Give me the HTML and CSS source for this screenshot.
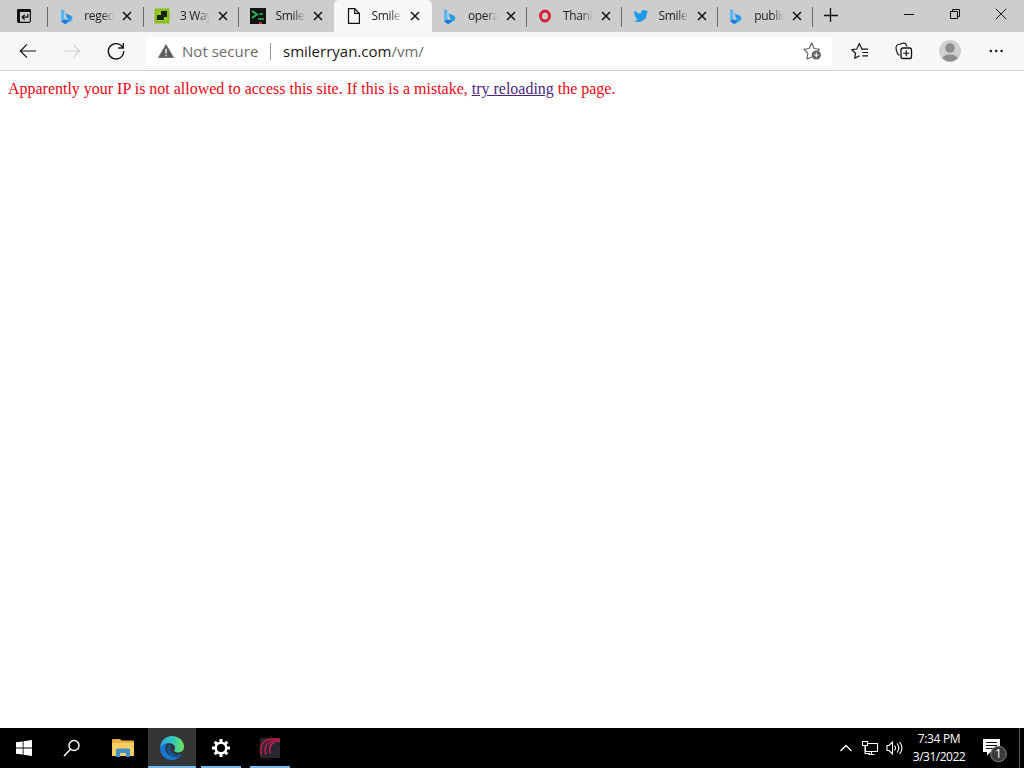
FILE: index.html
```html
<!DOCTYPE html>
<html lang="en">
<head>
<meta charset="utf-8">
<title>smilerryan.com/vm/</title>
<link rel="stylesheet" href="styles.css">
</head>
<body>
<svg class="defs" width="0" height="0">
  <defs>
    <linearGradient id="bingFill" x1="0" y1="0" x2="1" y2="1"><stop offset="0" stop-color="#45b2f0"/><stop offset=".5" stop-color="#2490e8"/><stop offset="1" stop-color="#4cc3ef"/></linearGradient>
    <linearGradient id="edgeGreen" x1="0" y1="0" x2="1" y2="0"><stop offset="0" stop-color="#29a9e0"/><stop offset=".55" stop-color="#36c6ba"/><stop offset="1" stop-color="#70e45c"/></linearGradient>
    <symbol id="bing" viewBox="0 0 16 16"><path d="M2 1l3.300 1.300v8.900L2 13.300z" fill="#58b6f2"/><path d="M6.500 5.200l5 2.300c2.500 1.200 2.500 4 .7 5.500L7.200 15.700 4 14.400l5-3.500-1.500-1.400z" fill="url(#bingFill)"/><path d="M2 13.200l3.300-2 4 1.500L7 15.700H5.200z" fill="#1d78db"/></symbol>
    <symbol id="close" viewBox="0 0 10 10"><path d="M1 1l8 8M9 1L1 9" fill="none" stroke="#111" stroke-width="1.500"/></symbol>
  </defs>
</svg>
<header class="tabs">
  <div class="tab-actions"><svg width="16" height="16" viewBox="0 0 16 16"><rect x="1.600" y="1.600" width="12.800" height="12.800" rx="1.500" fill="none" stroke="#111" stroke-width="1.200"/><path d="M1.500 1h13v3h-13zM1 2h3v12.500H2z" fill="#111"/><path d="M11.800 6v3.200H6.500M8.700 6.700L6.200 9.200l2.500 2.500" fill="none" stroke="#111" stroke-width="1.300"/></svg></div>
  <div class="tab"><svg class="fav"><use href="#bing"/></svg><span class="label">reged</span><svg class="x"><use href="#close"/></svg></div>
  <div class="tab"><svg class="fav" viewBox="0 0 16 16"><path d="M.5.500h15v15H.5z" fill="#88bd13"/><path d="M3 3h10v10H3z" fill="#9bce2b"/><path d="M7 3h6v6h-3v3H3V7h4z" fill="#172506"/></svg><span class="label">3 Way</span><svg class="x"><use href="#close"/></svg></div>
  <div class="tab"><svg class="fav" viewBox="0 0 16 16"><path d="M0 0h16v16H0z" fill="#101513"/><path d="M2 3l5 3.500L2 10" fill="none" stroke="#26b858" stroke-width="1.800"/><path d="M8 11h6M9 6h4" stroke="#26b858" stroke-width="1.500"/><path d="M9 14h3v2H9z" fill="#c22e2e"/></svg><span class="label">Smile</span><svg class="x"><use href="#close"/></svg></div>
  <div class="tab active"><svg class="fav" viewBox="0 0 16 16"><path d="M2.500.700h6.200l4.700 4.700v9.900H2.500zM8.700.700v4.700h4.700" fill="none" stroke="#111" stroke-width="1.200"/></svg><span class="label">Smile</span><svg class="x"><use href="#close"/></svg></div>
  <div class="tab"><svg class="fav"><use href="#bing"/></svg><span class="label">opera</span><svg class="x"><use href="#close"/></svg></div>
  <div class="tab"><svg class="fav" viewBox="0 0 16 16"><ellipse cx="8" cy="8" rx="4.500" ry="5" fill="none" stroke="#d61f35" stroke-width="2.800"/></svg><span class="label">Than<span>k</span></span><svg class="x"><use href="#close"/></svg></div>
  <div class="tab"><svg class="fav" viewBox="0 0 24 24"><path d="M23 5.200a9 9 0 0 1-2.600.7 4.500 4.500 0 0 0 2-2.500 9 9 0 0 1-2.900 1.100A4.500 4.500 0 0 0 11.800 8.700 13 13 0 0 1 2.500 3.900a4.500 4.500 0 0 0 1.400 6.100 4.500 4.500 0 0 1-2-.6 4.600 4.600 0 0 0 3.600 4.500 4.600 4.600 0 0 1-2 .1 4.600 4.600 0 0 0 4.200 3.200A9.200 9.200 0 0 1 1 19.100 13 13 0 0 0 20.800 7.500 9 9 0 0 0 23 5.200z" fill="#1d9bea"/></svg><span class="label">Smile</span><svg class="x"><use href="#close"/></svg></div>
  <div class="tab"><svg class="fav"><use href="#bing"/></svg><span class="label">public</span><svg class="x"><use href="#close"/></svg></div>
  <div class="new-tab"><svg width="14" height="14" viewBox="0 0 14 14"><path d="M0 7.500h14M6.500 0v14" stroke="#111" stroke-width="1.300"/></svg></div>
  <div class="window-controls">
    <svg viewBox="0 0 12 12"><path d="M1 6.500h10" stroke="#111"/></svg>
    <svg viewBox="0 0 12 12"><path d="M1.500 3.500h7v7h-7zM3.500 3.500v-2h7v7h-2" fill="none" stroke="#111"/></svg>
    <svg viewBox="0 0 12 12"><path d="M.8.800l10.400 10.400M11.200.800L.8 11.200" stroke="#111"/></svg>
  </div>
</header>
<nav class="toolbar">
  <div class="nav-buttons">
    <svg viewBox="0 0 20 20"><path d="M18 10H2.500M9 3.300L2.300 10 9 16.700" fill="none" stroke="#111" stroke-width="1.200"/></svg>
    <svg viewBox="0 0 20 20"><path d="M2 10h15.500M11.500 3.800l6.200 6.200-6.200 6.200" fill="none" stroke="#d2d2d2" stroke-width="1.200"/></svg>
    <svg viewBox="0 0 20 20"><path d="M16.600 6.300A7.700 7.700 0 1 0 17.700 10M17.300 2v5h-5" fill="none" stroke="#111" stroke-width="1.300"/></svg>
  </div>
  <div class="address">
    <svg class="warning" viewBox="0 0 16 14"><path d="M8 .5L15.700 13.700H.3z" fill="#5e5e5e" stroke="#5e5e5e" stroke-linejoin="round" stroke-width=".6"/><path d="M8 4.800v4.700M8 10.800v1.500" stroke="#fff" stroke-width="1.300"/></svg>
    <span class="security">Not secure</span>
    <i class="divider"></i>
    <span class="host">smilerryan.com</span><span class="path">/vm/</span>
    <svg class="star" viewBox="0 0 20 20"><path d="M10 16l-5.100 2 1-5.600L1.800 8.200 7.200 7.500 9.700 2l2.400 5.500 5.400.7-1.700 2" fill="none" stroke="#5e5e5e" stroke-width="1.100" stroke-linejoin="round"/><circle cx="14.300" cy="14" r="4.600" fill="#606060"/><path d="M11.800 14h5M14.300 11.500v5" stroke="#fff" stroke-width="1.100"/></svg>
  </div>
  <div class="tools">
    <svg viewBox="0 0 20 20"><path d="M18 8.200H12L9.300 2.500 6.800 8 1.800 8.700 5.500 12.300 4.700 17.200 9.500 14.700M12.300 11.500H18M12.300 14.800H18" fill="none" stroke="#111" stroke-width="1.200" stroke-linejoin="round"/></svg>
    <svg viewBox="0 0 20 20"><path d="M5.500 14.500C3.200 13.500 3 11.500 2.200 8.500 1.600 5.500 2 4.200 4.500 3.500L9.500 2.200C11.500 1.800 12.300 2.700 12.900 5.500" fill="none" stroke="#222" stroke-width="1.200"/><rect x="7" y="7" width="10.500" height="10.500" rx="2" fill="#f7f7f7" stroke="#111" stroke-width="1.300"/><path d="M9.200 12.250h6M12.250 9.200v6" stroke="#111" stroke-width="1.200"/></svg>
    <svg class="avatar" viewBox="0 0 22 22"><circle cx="11" cy="11" r="11" fill="#d2d0ce"/><circle cx="11" cy="8" r="4.800" fill="#8f8d8b"/><path d="M3.500 18.500c1-5.500 14-5.500 15 0a11 11 0 0 1-15 0z" fill="#8f8d8b"/></svg>
    <svg viewBox="0 0 20 20"><g fill="#111"><circle cx="4.800" cy="10" r="1.200"/><circle cx="10.200" cy="10" r="1.200"/><circle cx="15.600" cy="10" r="1.200"/></g></svg>
  </div>
</nav>
<main class="page">Apparently your IP is not allowed to access this site. If this is a mistake, <a href="#">try reloading</a> the page.</main>
<footer class="taskbar">
  <div class="task"><svg width="16" height="16" viewBox="0 0 16 16"><path d="M0 2.300l6.700-.9v6.200H0zM7.500 1.300L16 0v7.600H7.500zM0 8.400h6.700v6.200L0 13.700zM7.500 8.400H16V16l-8.500-1.200z" fill="#fff"/></svg></div>
  <div class="task"><svg width="18" height="18" viewBox="0 0 18 18"><circle cx="11" cy="6.500" r="5" fill="none" stroke="#fff" stroke-width="1.400"/><path d="M7.500 10.300L1 17" stroke="#fff" stroke-width="1.500"/></svg></div>
  <div class="task files"><svg width="22" height="18" viewBox="0 0 22 18"><path d="M0 1q0-1 1-1h7l1.500 1.500H21q1 0 1 1V17H0z" fill="#e5b340"/><path d="M0 4h22v13H0z" fill="#f5ce63"/><path d="M4 18v-7q0-1.500 1.500-1.500h11Q18 9.500 18 11v7h-4v-4H8v4z" fill="#3f91c5"/></svg></div>
  <div class="task open edge"><svg width="24" height="24" viewBox="0 0 24 24"><path d="M0 12C0 8 4 5.500 8 6c-3 3-3.500 7-1.500 10.500 2 3.500 6 4.700 10 4 2.300-.4 4-1.300 5.300-2.300C19.500 22 16 24 12 24 5 24 0 18.500 0 12z" fill="#1777cb"/><path d="M.1 11C.8 4.500 6 0 12 0c7 0 12 5.300 12 10.800 0 3.800-2.700 5.700-5.600 5.700-2.500 0-4.300-.9-4.300-1.900 0-.7 1-1.200 1-2.800 0-2.500-2.500-4.600-6-4.600-4.500 0-7.800 2-9 3.800z" fill="url(#edgeGreen)"/><path d="M10.500 8.200c-3.200 1.500-4.200 5-2.700 8.300 1.500 3.100 4.700 5.300 8.300 5.100 2.300-.1 4.300-1.300 5.800-2.900.3-.5-.1-.8-.6-.5-1.700.8-3.500.9-5.400.5-4-1-6.700-4.700-5-8z" fill="#10559e"/></svg></div>
  <div class="task open"><svg width="20" height="20" viewBox="-10 -10 20 20"><circle r="5.300" fill="none" stroke="#fff" stroke-width="2.500"/><path d="M0-9v3M0 9V6M-9 0h3M9 0H6M-6.300-6.300l2 2M6.300 6.300l-2-2M-6.300 6.300l2-2M6.300-6.300l-2 2" stroke="#fff" stroke-width="3"/></svg></div>
  <div class="task open"><svg width="22" height="22" viewBox="0 0 22 22"><path d="M1 1h20v20H1z" fill="#292630"/><path d="M2.500 18C0 10 3.500 4 10 2.500 14 1.500 18 2 21 2.500M7 17.500C4.500 11 7.500 6 12 4.500 15 3.700 18 4 21 4.500M11.500 16C9.500 12 11 7.500 15 5.500" fill="none" stroke="#c31c51" stroke-width="1.600"/></svg></div>
  <div class="tray">
    <svg class="chevron" viewBox="0 0 14 10"><path d="M1.500 8L7 2.500 12.500 8" fill="none" stroke="#fff" stroke-width="1.300"/></svg>
    <svg class="network" viewBox="0 0 17 16"><path d="M5.500 3.500h10v8H3.500v-5M.5 1.500h5v4h-5zM3 5.500v8h5M9.500 11.500v3M6.500 14.500h6" fill="none" stroke="#fff" stroke-width="1.100"/></svg>
    <svg class="volume" viewBox="0 0 18 16"><path d="M1 5.500h2L6.500 2v12L3 10.500H1zM8.500 5.500q2 2.500 0 5M11 3.500q3.700 4.500 0 9M13.500 2q5 6 0 12" fill="none" stroke="#fff" stroke-width="1.100"/></svg>
    <div class="clock"><span class="time">7:34 PM</span><span class="date">3/31/2022</span></div>
    <svg class="notice" viewBox="0 0 24 26"><path d="M0 2h17v13H7.500L4 18.500V15H0z" fill="#fff"/><path d="M3 5.500h11M3 8.500h11M3 11.500h7" stroke="#111" stroke-width="1.200"/><circle cx="15.500" cy="17" r="7.800" fill="#3b3b3b" stroke="#858585"/><text x="15.500" y="21.300" text-anchor="middle" fill="#fff" font-size="12">1</text></svg>
  </div>
</footer>
</body>
</html>
```
FILE: styles.css
```css
* { box-sizing: border-box; }
body { margin: 0; width: 1024px; height: 768px; overflow: hidden; display: flex; flex-direction: column; background: #fff; font-family: "Open Sans", "Noto Sans", sans-serif; }
svg { display: block; flex: none; }
.defs { position: absolute; }
.tabs { display: flex; height: 32px; flex: none; background: #cdcdcd; }
.tab-actions { width: 48px; padding: 8px 0 0 16px; flex: none; background: linear-gradient(#686868, #686868) right 7px / 1px 20px no-repeat; }
.tab { width: 95.6px; flex: none; display: flex; align-items: center; padding-left: 10.500px; background: linear-gradient(#686868, #686868) right 7px / 1px 20px no-repeat; }
.tab:nth-child(4) { background: none; }
.tab.active { width: 98px; margin: 0 -1px 0 -.7px; padding-left: 11.700px; background: #f7f7f7; border-radius: 5px 5px 0 0; }
.active + .tab { padding-left: 11px; }
.fav { width: 16px; height: 16px; }
.label { width: 30px; height: 20px; margin-left: 9.800px; overflow: hidden; white-space: nowrap; font-size: 12px; line-height: 20px; letter-spacing: -.35px; color: #202020; -webkit-mask-image: linear-gradient(90deg, #000 60%, transparent); mask-image: linear-gradient(90deg, #000 60%, transparent); }
.x { width: 10px; height: 10px; margin-left: 8px; }
.new-tab { padding: 8px 0 0 11px; }
.window-controls { margin-left: auto; padding: 8px 17px 0 0; display: flex; gap: 34px; }
.window-controls svg { width: 12px; height: 12px; }
.toolbar { height: 39px; flex: none; display: flex; align-items: center; background: #f7f7f7; border-bottom: 1px solid #cfcfcf; }
.nav-buttons { display: flex; gap: 24px; padding-left: 18px; width: 146px; flex: none; }
.nav-buttons svg, .tools svg { width: 20px; height: 20px; }
.address { width: 686px; height: 29px; flex: none; display: flex; align-items: center; padding: 0 10px 0 12px; background: #fff; border-radius: 3px; font-size: 15px; line-height: 22px; }
.warning { width: 16px; height: 14px; }
.security { width: 78px; margin-left: 8px; color: #6b6b6b; white-space: nowrap; letter-spacing: .03px; }
.divider { width: 1px; height: 17px; margin: 0 12px 0 10px; background: #999; }
.host { color: #171717; }
.path { color: #6d6d6d; }
.star { width: 20px; height: 20px; margin-left: auto; }
.tools { display: flex; align-items: center; gap: 24px; padding-left: 18px; }
.tools .avatar { width: 22px; height: 22px; margin: 0 1px; }
.page { flex: 1; padding: 8px; color: #f00613; font: 15.970px/19px "Liberation Serif", serif; }
.page a { color: #4d2580; }
.taskbar { height: 40px; flex: none; display: flex; background: #000; color: #fff; }
.task { width: 48px; flex: none; display: flex; align-items: center; justify-content: center; }
.files { width: 52px; padding-left: 2px; }
.open { width: 40px; margin-right: 9px; border-bottom: 2px solid #76b9ed; padding-top: 2px; }
.edge { width: 48px; margin-right: 5px; background: #353535; }
.tray { margin-left: auto; display: flex; align-items: center; padding-right: 12px; border-right: 1px solid #555; margin-right: 4px; }
.chevron { width: 14px; height: 10px; }
.network { width: 17px; height: 16px; margin-left: 9px; }
.volume { width: 18px; height: 16px; margin-left: 7px; }
.clock { width: 58px; margin: 0 15px 0 6px; display: flex; flex-direction: column; align-items: center; font-size: 12px; line-height: 18px; white-space: nowrap; }
.time { letter-spacing: -.35px; }
.date { letter-spacing: -.5px; }
.notice { width: 24px; height: 26px; margin-top: 4px; }
```
